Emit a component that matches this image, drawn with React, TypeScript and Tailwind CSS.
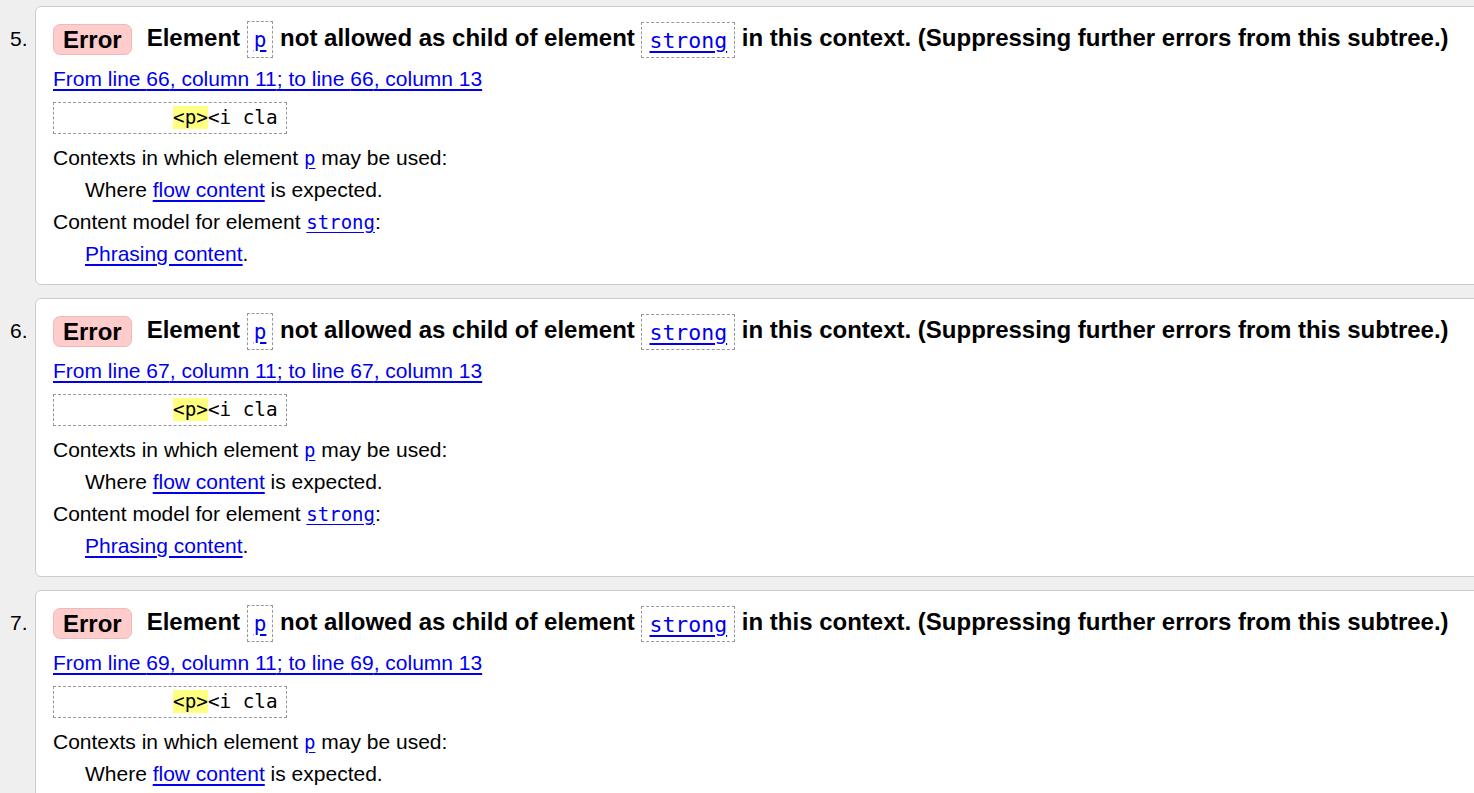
const mono = "font-['DejaVu_Sans_Mono','Liberation_Mono',monospace]";

type Item = { n: number; line: number };

const items: Item[] = [
  { n: 5, line: 66 },
  { n: 6, line: 67 },
  { n: 7, line: 69 },
];

const Link = ({ children }: { children: React.ReactNode }) => (
  <span className="text-[#0000ee] underline underline-offset-[3px]">{children}</span>
);

const MonoLink = ({ children }: { children: React.ReactNode }) => (
  <span className={`${mono} text-[19px] text-[#0000ee] underline underline-offset-[3px]`}>{children}</span>
);

const Card = ({ n, line }: Item) => (
  <div className="flex">
    <div className="w-[35px] shrink-0 pl-[10px] pt-[17px] text-[21px] leading-[32px]">{n}.</div>
    <div className="w-[1480px] shrink-0 rounded-[6px] border border-[#cccccc] bg-white pl-[17px] pt-[15px] pb-[14px]">
      {/* heading */}
      <div className="flex h-[34px] items-center text-[24px] font-bold">
        <span className="rounded-[7px] border border-[#f0b8b8] bg-[#ffcccc] px-[9px] leading-[29px]">Error</span>
        <span className="ml-[15px] whitespace-pre">
          Element{" "}
          <span className="inline-block border border-dashed border-[#999999] px-[6px] align-middle leading-[33px]">
            <span className={`${mono} text-[21px] font-normal text-[#0000ee] underline underline-offset-[3px]`}>p</span>
          </span>{" "}
          not allowed as child of element{" "}
          <span className="inline-block border border-dashed border-[#999999] px-[7px] align-middle leading-[33px]">
            <span className={`${mono} text-[21.5px] font-normal text-[#0000ee] underline underline-offset-[3px]`}>strong</span>
          </span>{" "}
          in this context. (Suppressing further errors from this subtree.)
        </span>
      </div>

      {/* location */}
      <div className="mt-[7px] text-[21px] leading-[32px]">
        <Link>From line {line}, column 11</Link>
        <Link>; to line {line}, column 13</Link>
      </div>

      {/* extract */}
      <div className="mt-[7px] h-[32px] w-[234px] border border-dashed border-[#999999] pl-[3px]">
        <pre className={`${mono} text-[19.3px] leading-[29px] text-black`}>
          {"          "}
          <span className="bg-[#ffff80]">{"<p>"}</span>
          {"<i cla"}
        </pre>
      </div>

      {/* details */}
      <div className="mt-[8px] text-[21px] leading-[32px]">
        <div>
          Contexts in which element <MonoLink>p</MonoLink> may be used:
        </div>
        <div className="pl-[32px]">
          Where <Link>flow content</Link> is expected.
        </div>
        <div>
          Content model for element <MonoLink>strong</MonoLink>:
        </div>
        <div className="pl-[32px]">
          <Link>Phrasing content</Link>.
        </div>
      </div>
    </div>
  </div>
);

export default function App() {
  return (
    <div className="h-[793px] w-[1474px] overflow-hidden bg-[#efefef] pt-[6px] font-['Liberation_Sans',Arial,sans-serif] text-black">
      <div className="flex flex-col gap-[13px]">
        {items.map((it) => (
          <Card key={it.n} {...it} />
        ))}
      </div>
    </div>
  );
}
